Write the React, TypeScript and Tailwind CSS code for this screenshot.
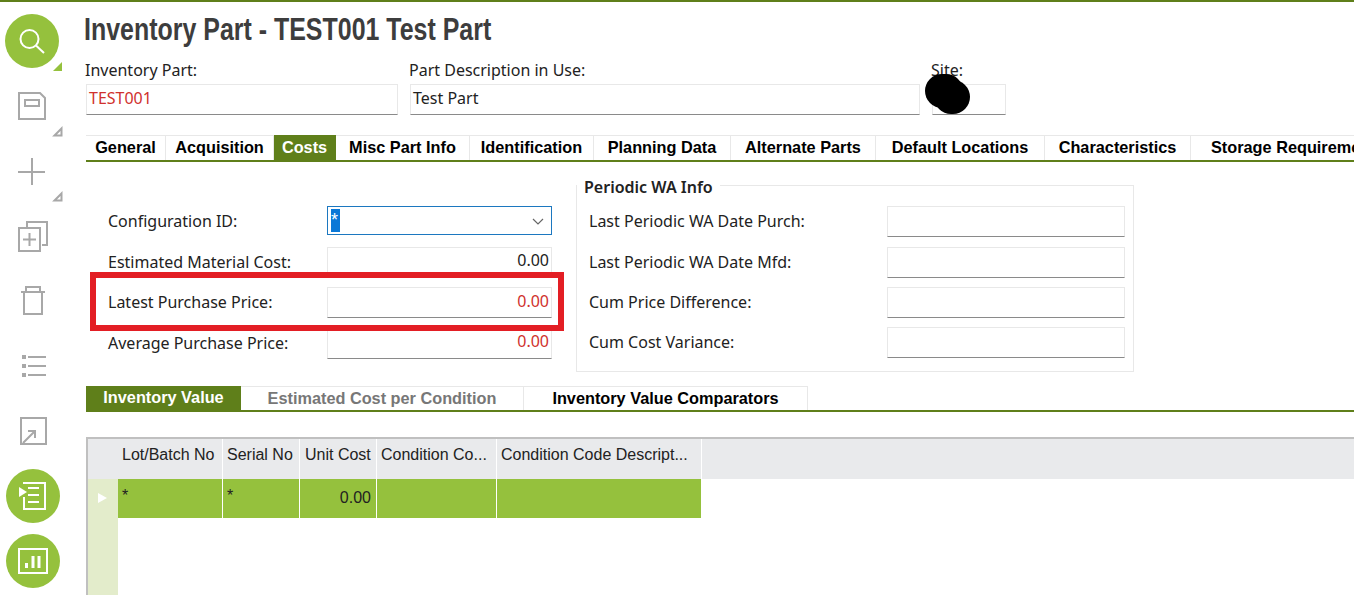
const label = "font-['Noto_Sans',sans-serif] text-[16px] text-[#222] leading-5";
const arial = "font-['Liberation_Sans',Arial,sans-serif]";
const inputBox = "border border-[#e8e8e8] border-b-[#8a8a8a] bg-white";

const tabs: [string, number, boolean?][] = [
  ["General", 80], ["Acquisition", 108], ["Costs", 62, true], ["Misc Part Info", 134], ["Identification", 124],
  ["Planning Data", 137], ["Alternate Parts", 145], ["Default Locations", 169], ["Characteristics", 146],
];

function Corner({ green }: { green?: boolean }) {
  return (
    <svg className="absolute left-[47px] top-[47px]" width="11" height="11" viewBox="0 0 11 11">
      {green ? <path d="M10 1V10H1Z" fill="#95c13d" /> : <path d="M9.5 2.5V9.5H2.5Z" fill="none" stroke="#a8a8a8" strokeWidth="2" />}
    </svg>
  );
}

function Circle({ children }: { children: React.ReactNode }) {
  return <div className="w-[54px] h-[54px] rounded-full bg-[#95c13d] flex items-center justify-center">{children}</div>;
}

function Side() {
  const g = { fill: "none", stroke: "#a8a8a8", strokeWidth: 2 };
  return (
    <div className="w-[86px] shrink-0 flex flex-col pl-[5px] pt-[12px]">
      <div className="relative h-[65px]">
        <Circle>
          <svg width="30" height="30" viewBox="0 0 30 30" fill="none" stroke="#fff" strokeWidth="2"><circle cx="12.5" cy="13" r="9" /><path d="M19 19.5L27 27" /></svg>
        </Circle>
        <Corner green />
      </div>
      <div className="relative h-[65px] pl-[13px] pt-[13px]">
        <svg width="28" height="28" viewBox="0 0 28 28" {...g}><path d="M1 1H22L27 6V27H1Z" /><rect x="7" y="8" width="14" height="6" /></svg>
        <Corner />
      </div>
      <div className="relative h-[66px] pl-[13px] pt-[14px]">
        <svg width="28" height="28" viewBox="0 0 28 28" {...g}><path d="M14 0V27M0 14H27" /></svg>
        <Corner />
      </div>
      <div className="h-[62px] pl-[13px] pt-[11px]">
        <svg width="30" height="32" viewBox="0 0 30 32" {...g}><path d="M9 6V1H29V24H24" /><rect x="1" y="7" width="21" height="23" /><path d="M11.5 12V25M5 18.5H18" /></svg>
      </div>
      <div className="h-[66px] pl-[16px] pt-[14px]">
        <svg width="24" height="30" viewBox="0 0 24 30" {...g}><path d="M0 6H24M5 6V1H19V6M3 6V28H21V6" /></svg>
      </div>
      <div className="h-[66px] pl-[17px] pt-[17px]">
        <svg width="24" height="22" viewBox="0 0 24 22"><path d="M0 2H4M0 11H4M0 20H4" stroke="#a8a8a8" strokeWidth="4" /><path d="M6 2H24M6 11H24M6 20H24" stroke="#a8a8a8" strokeWidth="2" /></svg>
      </div>
      <div className="h-[65px] pl-[15px] pt-[13px]">
        <svg width="27" height="28" viewBox="0 0 27 28" {...g}><rect x="1" y="1" width="25" height="26" /><path d="M3 26L14 15M8 14H15V21" /></svg>
      </div>
      <div className="h-[65px] pl-[1px]">
        <Circle>
          <svg width="28" height="28" viewBox="0 0 28 28" fill="none" stroke="#fff" strokeWidth="2"><path d="M4 1H26V27H5V15" /><path d="M9 6H20M9 13H20M9 20H20" /><path d="M0 5L8 10L0 15Z" fill="#fff" stroke="none" /></svg>
        </Circle>
      </div>
      <div className="pl-[1px]">
        <Circle>
          <svg width="30" height="26" viewBox="0 0 30 26" fill="none" stroke="#fff" strokeWidth="2"><rect x="1" y="1" width="28" height="24" /><path d="M8.5 15V20M15 8V20M21 8V20" strokeWidth="3" /></svg>
        </Circle>
      </div>
    </div>
  );
}

function LeftRow({ name, value, red, h, top }: { name: string; value: string; red?: boolean; h: string; top: string }) {
  return (
    <div className={`flex items-start ${h}`}>
      <div className={`${label} w-[241px] pl-[22px] pt-[5px]`}>{name}</div>
      <div className={`${inputBox} w-[225px] h-[31px] text-right pr-[2px] ${top} ${label} ${red ? "!text-[#d0312d]" : ""}`}>{value}</div>
    </div>
  );
}

function RightRow({ name, h }: { name: string; h: string }) {
  return (
    <div className={`flex items-start ${h}`}>
      <div className={`${label} w-[298px] pt-[5px]`}>{name}</div>
      <div className={`${inputBox} w-[238px] h-[31px]`} />
    </div>
  );
}

export default function App() {
  return (
    <div className="relative w-[1354px] h-[595px] overflow-hidden bg-white border-t-2 border-[#5f7f1a] flex">
      <Side />
      <div className="flex-1 min-w-0">
        <div className="font-['Liberation_Sans',sans-serif] font-bold text-[31px] leading-[36px] text-[#3d3d3d] pt-[10px] h-[58px] whitespace-nowrap scale-x-[0.805] origin-left -ml-[2px]">Inventory Part - TEST001 Test Part</div>
        <div className="flex h-[75px]">
          <div className="w-[324px]">
            <div className={`${label} ml-[-1px]`}>Inventory Part:</div>
            <div className={`${inputBox} w-[312px] h-[31px] mt-[4px] pl-[2px] pt-[3px] ${label} !text-[#d0312d]`}>TEST001</div>
          </div>
          <div className="w-[522px]">
            <div className={`${label} ml-[-1px]`}>Part Description in Use:</div>
            <div className={`${inputBox} w-[510px] h-[31px] mt-[4px] pl-[2px] pt-[3px] ${label}`}>Test Part</div>
          </div>
          <div>
            <div className={`${label} ml-[-1px]`}>Site:</div>
            <div className={`${inputBox} w-[74px] h-[31px] mt-[4px]`} />
          </div>
        </div>
        <div className={`flex h-[27px] border-b-2 border-[#5f7f1a] ${arial} text-[16.3px] font-bold`}>
          {tabs.map(([t, w, active]) => (
            <div key={t} style={{ width: w }} className={`shrink-0 whitespace-nowrap text-center leading-[22px] border-t border-r border-[#e8e8e8] ${active ? "bg-[#5f7f1a] text-white border-transparent" : "text-black"}`}>{t}</div>
          ))}
          <div className="flex-1 min-w-0 whitespace-nowrap overflow-hidden pl-[20px] leading-[22px] border-t border-[#e8e8e8] text-black">Storage Requirements</div>
        </div>
        <div className="flex h-[224px]">
          <div className="w-[490px] pt-[44px]">
            <div className="flex items-start h-[41px]">
              <div className={`${label} w-[241px] pl-[22px] pt-[5px]`}>Configuration ID:</div>
              <div className="w-[225px] h-[29px] border border-[#1c78c0] flex items-center justify-between pl-[3px] pr-[6px]">
                <span className={`bg-[#0a78d7] text-white ${arial} text-[18px] leading-[23px] h-[23px] w-[9px]`}>*</span>
                <svg width="14" height="14" viewBox="0 0 14 14" fill="none" stroke="#666" strokeWidth="1.2"><path d="M2 5L7 10L12 5" /></svg>
              </div>
            </div>
            <LeftRow name="Estimated Material Cost:" value="0.00" h="h-[40px]" top="pt-[2px]" />
            <LeftRow name="Latest Purchase Price:" value="0.00" red h="h-[41px]" top="pt-[3px]" />
            <LeftRow name="Average Purchase Price:" value="0.00" red h="h-[31px]" top="pt-[2px]" />
          </div>
          <div className="relative mt-[23px] w-[558px] h-[187px] border border-[#e8e8e8] pl-[12px] pt-[20px]">
            <div className={`absolute left-[0px] top-[-9px] bg-white px-[7px] ${label} font-semibold`}>Periodic WA Info</div>
            <RightRow name="Last Periodic WA Date Purch:" h="h-[41px]" />
            <RightRow name="Last Periodic WA Date Mfd:" h="h-[40px]" />
            <RightRow name="Cum Price Difference:" h="h-[40px]" />
            <RightRow name="Cum Cost Variance:" h="h-[31px]" />
          </div>
        </div>
        <div className={`flex h-[26px] border-b-2 border-[#5f7f1a] ${arial} text-[16.3px] font-bold`}>
          <div className="w-[155px] text-center leading-[22px] bg-[#5f7f1a] text-white">Inventory Value</div>
          <div className="w-[283px] text-center leading-[22px] text-[#777] border-t border-r border-[#e8e8e8]">Estimated Cost per Condition</div>
          <div className="w-[284px] text-center leading-[22px] text-black border-t border-r border-[#e8e8e8]">Inventory Value Comparators</div>
        </div>
        <div className={`mt-[25px] border-t-2 border-l-2 border-[#c0c0c0] ${arial} text-[16px] text-[#222]`}>
          <div className="flex h-[40px] bg-[#e9eaec] leading-[32px]">
            <div className="w-[30px]" />
            <div className="w-[105px] pl-[4px] border-r border-white whitespace-nowrap">Lot/Batch No</div>
            <div className="w-[77px] pl-[4px] border-r border-white whitespace-nowrap">Serial No</div>
            <div className="w-[77px] pl-[5px] border-r border-white whitespace-nowrap">Unit Cost</div>
            <div className="w-[120px] pl-[4px] border-r border-white whitespace-nowrap">Condition Co...</div>
            <div className="w-[205px] pl-[4px] border-r border-white whitespace-nowrap">Condition Code Descript...</div>
          </div>
          <div className="flex h-[116px]">
            <div className="w-[30px] bg-[#e3eccb] pt-[14px] pl-[10px]">
              <svg width="9" height="10" viewBox="0 0 9 10"><path d="M0 0L9 5L0 10Z" fill="#fff" /></svg>
            </div>
            <div className="flex h-[40px] bg-[#95c13d] border-b border-white">
              <div className="w-[105px] pl-[4px] border-r border-white leading-[34px]">*</div>
              <div className="w-[77px] pl-[4px] border-r border-white leading-[34px]">*</div>
              <div className="w-[77px] pr-[5px] text-right border-r border-white leading-[38px]">0.00</div>
              <div className="w-[120px] border-r border-white" />
              <div className="w-[205px] border-r border-white" />
            </div>
          </div>
        </div>
      </div>
      {/* markup drawn over the screenshot */}
      <div className="absolute left-[90px] top-[270px] w-[474px] h-[59px] border-[6px] border-[#e31e24]" />
      <div className="absolute left-[925px] top-[72px] w-[38px] h-[34px] rounded-full bg-black" />
      <div className="absolute left-[934px] top-[78px] w-[36px] h-[34px] rounded-full bg-black" />
    </div>
  );
}
